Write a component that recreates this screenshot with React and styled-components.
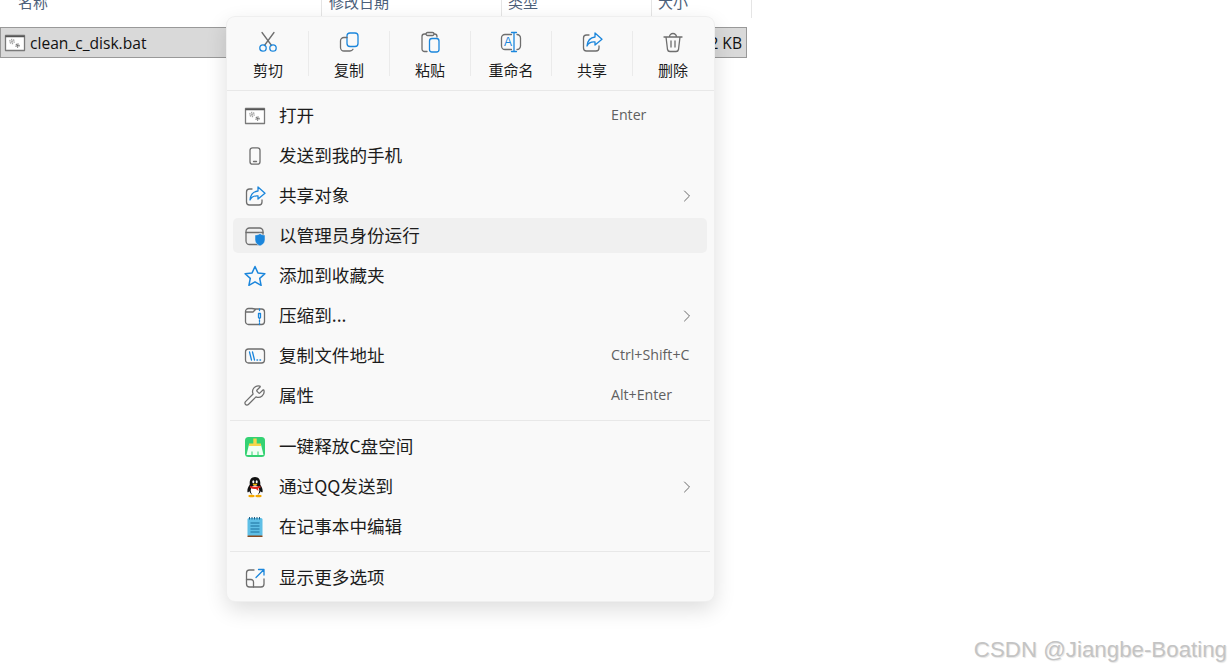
import React from "react";
import styled, { createGlobalStyle } from "styled-components";
import { Wrench, ChevronRight } from "lucide-react";

const GREY = "#6e6e6e";
const BLUE = "#1b86dc";

const GlobalStyle = createGlobalStyle`
  html, body {
    margin: 0;
    height: 100%;
    background: #fff;
    overflow: hidden;
    font-family: "Noto Sans CJK SC", "Noto Sans", sans-serif;
  }
`;

const Page = styled.div`
  position: relative;
  width: 1231px;
  height: 670px;
  overflow: hidden;
`;

const Header = styled.div`
  display: flex;
  height: 18px;
  margin-bottom: 9px;
`;

const HeaderCell = styled.div`
  width: ${(p) => p.$width}px;
  box-sizing: border-box;
  padding-left: ${(p) => p.$pad}px;
  border-right: 1px solid #e5e5e5;
  color: #4c607a;
  font-size: 15px;
  line-height: 4px;
`;

const FileRow = styled.div`
  display: flex;
  align-items: center;
  justify-content: space-between;
  box-sizing: border-box;
  width: 747px;
  height: 31px;
  padding: 0 4px 0 2px;
  background: #d9d9d9;
  border: 1px solid #999;
  color: #111;
  font-family: "Open Sans", sans-serif;
  font-size: 15.6px;
`;

const FileName = styled.div`
  display: flex;
  align-items: center;
  gap: 3px;
`;

const Menu = styled.div`
  position: absolute;
  left: 227px;
  top: 17px;
  width: 487px;
  height: 584px;
  box-sizing: border-box;
  background: #f9f9f9;
  border-radius: 8px;
  box-shadow: 0 0 0 1px #efefef, 0 8px 22px rgba(0, 0, 0, 0.14);
  color: #1c1c1c;
`;

const Toolbar = styled.div`
  display: flex;
  align-items: flex-start;
  height: 74px;
  box-sizing: border-box;
  padding: 13px 0 0 1px;
  border-bottom: 1px solid #e8e8e8;
`;

const ToolButton = styled.div`
  display: flex;
  flex-direction: column;
  align-items: center;
  width: 80px;
  font-size: 15px;
  line-height: 20px;
`;

const ToolLabel = styled.span`
  margin-top: 6px;
`;

const ToolSep = styled.div`
  width: 1px;
  height: 45px;
  margin-top: 1px;
  background: #ebebeb;
`;

const Group = styled.div`
  display: flex;
  flex-direction: column;
  gap: 5px;
  padding: ${(p) => p.$pad};
`;

const Row = styled.div`
  display: grid;
  grid-template-columns: 24px 1fr 83px;
  column-gap: 12px;
  align-items: center;
  height: 35px;
  margin: 0 7px 0 6px;
  padding: 0 13px 0 10px;
  border-radius: 5px;
  background: ${(p) => (p.$active ? "#f0f0f0" : "transparent")};
  font-size: 17.6px;
`;

const RowLabel = styled.span`
  margin-bottom: 2px;
`;

const Shortcut = styled.span`
  color: #606060;
  font-family: "Open Sans", sans-serif;
  font-size: 14.2px;
  white-space: nowrap;
  margin-bottom: 2px;
`;

const Arrow = styled.span`
  display: flex;
  justify-self: end;
  margin-right: -3px;
  color: #6a6a6a;
`;

const Divider = styled.div`
  height: 1px;
  margin: 0 4px 0 3px;
  background: #e8e8e8;
`;

const Watermark = styled.div`
  position: absolute;
  right: 4px;
  top: 636px;
  color: #c4c4c4;
  font-family: "Liberation Sans", sans-serif;
  font-size: 22.3px;
  line-height: 28px;
  white-space: nowrap;
  text-shadow: 1px 1px 1px #e4e4e4;
`;

const Icon = ({ children }) => (
  <svg width="24" height="24" viewBox="0 0 24 24" fill="none" strokeWidth="1.3" strokeLinecap="round" strokeLinejoin="round">
    {children}
  </svg>
);

const ScissorsIcon = () => (
  <Icon>
    <path d="M6 2.500 15.600 15.500M18 2.500 8.400 15.500" stroke={GREY} />
    <circle cx="7" cy="18" r="3.200" stroke={BLUE} />
    <circle cx="17" cy="18" r="3.200" stroke={BLUE} />
  </Icon>
);

const CopyIcon = () => (
  <Icon>
    <rect x="10" y="3" width="11" height="13.500" rx="3" stroke={BLUE} />
    <path d="M10 7.500H7A3.500 3.500 0 0 0 3.500 11v6.500A3.500 3.500 0 0 0 7 21h6a3.500 3.500 0 0 0 3-1.800" stroke={GREY} />
  </Icon>
);

const PasteIcon = () => (
  <Icon>
    <path d="M9 21.500H6.500A2.500 2.500 0 0 1 4 19V6.500A2.500 2.500 0 0 1 6.500 4H8M16 4h.5A2.500 2.500 0 0 1 19 6.500V7" stroke={GREY} />
    <rect x="8" y="2.500" width="8" height="3" rx="1.500" stroke={GREY} />
    <rect x="11.500" y="8.500" width="9.500" height="13.500" rx="2.500" stroke={BLUE} />
  </Icon>
);

const RenameIcon = () => (
  <Icon>
    <path d="M12.500 4.500H6A3.500 3.500 0 0 0 2.500 8v8A3.500 3.500 0 0 0 6 19.500h6.500M18 4.500h0a3.500 3.500 0 0 1 3.500 3.500v8a3.500 3.500 0 0 1-3.500 3.500h0" stroke={GREY} />
    <path d="M15 2.500v19M12.500 2.500h5M12.500 21.500h5" stroke={BLUE} />
    <text x="9" y="15.500" fontSize="12" textAnchor="middle" fill={BLUE} fontFamily="Liberation Sans, sans-serif">A</text>
  </Icon>
);

const ShareIcon = () => (
  <Icon>
    <path d="M9 5H6.500a3 3 0 0 0-3 3v10a3 3 0 0 0 3 3H16a3 3 0 0 0 3-3v-2" stroke={GREY} />
    <path d="M15 3l7 6.300-7 5.700v-3c-4-.4-6.500 1-8 4 .5-5 3-8.500 8-9z" stroke={BLUE} />
  </Icon>
);

const TrashIcon = () => (
  <Icon>
    <path d="M3 7h18M8.500 7a3.500 3.500 0 0 1 7 0M5 7l1.500 12.500a2.500 2.500 0 0 0 2.500 2h6a2.500 2.500 0 0 0 2.500-2L19 7M10 11v6M14 11v6" stroke={GREY} />
  </Icon>
);

const BatIcon = () => (
  <Icon>
    <rect x="2.500" y="4.500" width="19" height="15" fill="#fff" stroke="#7a7a7a" />
    <path d="M3 5.500h18" stroke="#555" />
    <circle cx="9" cy="10.500" r="1.300" fill="#b0b0b0" />
    <circle cx="9" cy="10.500" r="2.200" stroke="#a0a0a0" strokeWidth="1.300" strokeDasharray="1.200 .9" strokeLinecap="butt" />
    <circle cx="14.500" cy="14.500" r="1" fill="#707070" />
    <circle cx="14.500" cy="14.500" r="1.600" stroke="#666" strokeWidth="1.100" strokeDasharray="1 .7" strokeLinecap="butt" />
  </Icon>
);

const PhoneIcon = () => (
  <Icon>
    <rect x="7" y="3.800" width="10" height="16.400" rx="2.500" stroke={GREY} />
    <path d="M10.500 17.500h3" stroke={GREY} />
  </Icon>
);

const ShieldIcon = () => (
  <Icon>
    <rect x="3" y="4" width="17" height="16.500" rx="3.500" stroke={GREY} />
    <path d="M3 8.500h17" stroke={GREY} />
    <path d="M17 9.500c1.200 1 3 1.500 5 1.500v5c0 3-2.500 4.800-5 6-2.500-1.200-5-3-5-6v-5c2 0 3.800-.5 5-1.500z" fill={BLUE} stroke="#f0f0f0" strokeWidth=".5" />
  </Icon>
);

const StarIcon = () => (
  <Icon>
    <path d="M12 2.500l2.900 6.400 7 .8-5.200 4.700 1.400 6.900-6.100-3.500-6.100 3.500 1.400-6.900-5.200-4.700 7-.8z" stroke={BLUE} strokeWidth="1.500" />
  </Icon>
);

const ZipIcon = () => (
  <Icon>
    <path d="M2.500 8h7.500l3-3M5.500 4.500H9l3 .5h6.500a3 3 0 0 1 3 3v9.500a3 3 0 0 1-3 3h-13a3 3 0 0 1-3-3v-10a3 3 0 0 1 3-3z" stroke={GREY} />
    <path d="M16.500 5v3M16.500 16v4.500" stroke={BLUE} strokeDasharray="1.500 1.500" />
    <path d="M15.500 9.500h2v4l-1 1-1-1z" stroke={BLUE} />
  </Icon>
);

const PathIcon = () => (
  <Icon>
    <rect x="2.500" y="5" width="19" height="14" rx="3" stroke={GREY} />
    <path d="M6.500 8l2 8M9.500 8l2 8" stroke={BLUE} />
    <path d="M14 16h.5M17 16h.5" stroke={BLUE} strokeWidth="1.500" />
  </Icon>
);

const CleanIcon = () => (
  <svg width="24" height="24" viewBox="0 0 24 24">
    <rect x="2" y="2" width="20" height="20" rx="3.500" fill="#34d273" />
    <rect x="10.300" y="3.500" width="3.400" height="6" fill="#f6d64a" />
    <path d="M6 9.500h12l2.500 10.500H3.500z" fill="#f1fff5" />
    <path d="M9 20v-3.500M15 20v-3.500" stroke="#34d273" strokeWidth="1" />
    <rect x="6" y="8.500" width="12" height="2.500" fill="#f6d64a" />
  </svg>
);

const QQIcon = () => (
  <svg width="24" height="24" viewBox="0 0 24 24">
    <path d="M12 2c-3.700 0-5.300 2.800-5.300 5.800v2c-1.700 2.200-2.700 4.800-2.200 7.500.8.200 1.400-.5 1.800-1 .5 1.300 1.400 2.400 2.500 3.200h6.400c1.100-.8 2-1.900 2.500-3.200.4.500 1 1.200 1.800 1 .5-2.700-.5-5.300-2.200-7.500v-2C17.300 4.800 15.700 2 12 2z" fill="#111" />
    <ellipse cx="12" cy="15.500" rx="4.300" ry="5.200" fill="#fff" />
    <ellipse cx="10.300" cy="6.700" rx="1" ry="1.500" fill="#fff" />
    <ellipse cx="13.700" cy="6.700" rx="1" ry="1.500" fill="#fff" />
    <path d="M9.500 8.800h5l-1 1.500h-3z" fill="#f5b800" />
    <path d="M6.800 10.800c3 1.300 7.400 1.300 10.400 0l.5 1.700-2.700 1 .5 2.500-2.500-2c-2 .3-3.700 0-5.700-1z" fill="#e0261c" />
    <ellipse cx="8.500" cy="21" rx="3.200" ry="1.300" fill="#f5a800" />
    <ellipse cx="15.500" cy="21" rx="3.200" ry="1.300" fill="#f5a800" />
  </svg>
);

const NotepadIcon = () => (
  <svg width="24" height="24" viewBox="0 0 24 24">
    <rect x="4.500" y="3" width="15" height="18" rx="1.500" fill="#5fbfe6" />
    <rect x="4.500" y="20.500" width="15" height="1.500" fill="#8a4a1f" />
    <path d="M6.500 2v2.500M9 2v2.500M11.500 2v2.500M14 2v2.500M16.500 2v2.500" stroke="#1d5f86" strokeWidth="1" />
    <path d="M7.500 8h9M7.500 11h9M7.500 14h9M7.500 17h9" stroke="#1a6f9c" strokeWidth="1" />
  </svg>
);

const MoreIcon = () => (
  <Icon>
    <path d="M11 4H6.500a3 3 0 0 0-3 3v11a3 3 0 0 0 3 3H18a3 3 0 0 0 3-3v-5" stroke={GREY} />
    <path d="M3.500 13.500H8a2.500 2.500 0 0 1 2.500 2.500v5" stroke={GREY} />
    <path d="M13 11.500 21 3.500M15.500 3.500H21V9" stroke={BLUE} />
  </Icon>
);

const tools = [
  { label: "剪切", icon: <ScissorsIcon /> },
  { label: "复制", icon: <CopyIcon /> },
  { label: "粘贴", icon: <PasteIcon /> },
  { label: "重命名", icon: <RenameIcon /> },
  { label: "共享", icon: <ShareIcon /> },
  { label: "删除", icon: <TrashIcon /> },
];

const mainItems = [
  { label: "打开", icon: <BatIcon />, shortcut: "Enter" },
  { label: "发送到我的手机", icon: <PhoneIcon /> },
  { label: "共享对象", icon: <ShareIcon />, more: true },
  { label: "以管理员身份运行", icon: <ShieldIcon />, active: true },
  { label: "添加到收藏夹", icon: <StarIcon /> },
  { label: "压缩到...", icon: <ZipIcon />, more: true },
  { label: "复制文件地址", icon: <PathIcon />, shortcut: "Ctrl+Shift+C" },
  { label: "属性", icon: <Wrench size={23} color={GREY} strokeWidth={1.3} />, shortcut: "Alt+Enter" },
];

const appItems = [
  { label: "一键释放C盘空间", icon: <CleanIcon /> },
  { label: "通过QQ发送到", icon: <QQIcon />, more: true },
  { label: "在记事本中编辑", icon: <NotepadIcon /> },
];

const MenuRow = ({ item }) => (
  <Row $active={item.active}>
    {item.icon}
    <RowLabel>{item.label}</RowLabel>
    {item.shortcut && <Shortcut>{item.shortcut}</Shortcut>}
    {item.more && (
      <Arrow>
        <ChevronRight size={20} strokeWidth={1.2} />
      </Arrow>
    )}
  </Row>
);

export default function App() {
  return (
    <Page>
      <GlobalStyle />
      <Header>
        <HeaderCell $width={322} $pad={18}>名称</HeaderCell>
        <HeaderCell $width={180} $pad={7}>修改日期</HeaderCell>
        <HeaderCell $width={150} $pad={6}>类型</HeaderCell>
        <HeaderCell $width={100} $pad={6}>大小</HeaderCell>
      </Header>
      <FileRow>
        <FileName>
          <BatIcon />
          clean_c_disk.bat
        </FileName>
        <span>2 KB</span>
      </FileRow>

      <Menu>
        <Toolbar>
          {tools.map((tool, i) => (
            <React.Fragment key={tool.label}>
              {i > 0 && <ToolSep />}
              <ToolButton>
                {tool.icon}
                <ToolLabel>{tool.label}</ToolLabel>
              </ToolButton>
            </React.Fragment>
          ))}
        </Toolbar>
        <Group $pad="7px 0">
          {mainItems.map((item) => (
            <MenuRow key={item.label} item={item} />
          ))}
        </Group>
        <Divider />
        <Group $pad="8px 0 7px">
          {appItems.map((item) => (
            <MenuRow key={item.label} item={item} />
          ))}
        </Group>
        <Divider />
        <Group $pad="8px 0 0">
          <MenuRow item={{ label: "显示更多选项", icon: <MoreIcon /> }} />
        </Group>
      </Menu>

      <Watermark>CSDN @Jiangbe-Boating</Watermark>
    </Page>
  );
}
